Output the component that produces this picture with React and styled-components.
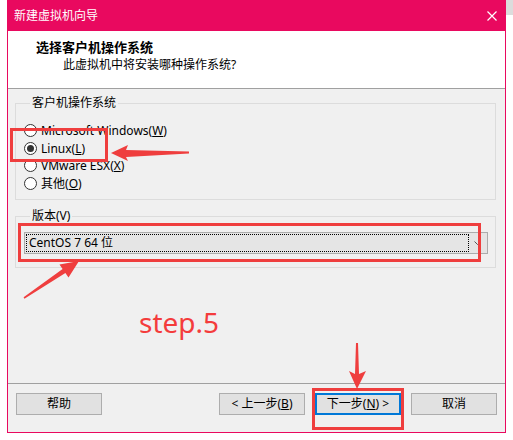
import styled, { createGlobalStyle } from 'styled-components';

const GlobalStyle = createGlobalStyle`
  body {
    margin: 0;
    background: #ffffff;
    font-family: "Noto Sans", "Noto Sans CJK SC", sans-serif;
    font-size: 12px;
    color: #000000;
  }
`;

const Page = styled.div`
  position: relative;
  width: 513px;
  height: 440px;
  padding-left: 7px;
  box-sizing: border-box;
  background: #ffffff linear-gradient(#dcdcdc, #dcdcdc) no-repeat right top / 7px 15px;
  overflow: hidden;
`;

const Window = styled.div`
  width: 499px;
  height: 433px;
  box-sizing: border-box;
  border: 1px solid #e9095f;
  border-top: 0;
  background: #f0f0f0;
  display: flex;
  flex-direction: column;
`;

const TitleBar = styled.div`
  height: 31px;
  flex-shrink: 0;
  background: #e9095f;
  color: #ffffff;
  display: flex;
  align-items: center;
  justify-content: space-between;
  padding: 0 9px 0 7px;
  margin: 0 -1px;
  line-height: 16px;
`;

const Header = styled.div`
  height: 58px;
  flex-shrink: 0;
  box-sizing: border-box;
  background: #ffffff;
  border-bottom: 1px solid #a0a0a0;
  padding: 8px 0 0 28px;
  line-height: 16px;
`;

const HeaderTitle = styled.div`
  font-size: 13px;
  font-weight: bold;
`;

const HeaderText = styled.div`
  margin: 2px 0 0 27px;
`;

const Body = styled.div`
  flex: 1;
  padding: 6px 9px 0 7px;
`;

const Group = styled.fieldset`
  margin: ${(p) => p.$top || 0}px 0 0;
  padding: ${(p) => p.$pad};
  border: 1px solid #dcdcdc;
  min-width: 0;
`;

const Legend = styled.legend`
  margin-left: 6px;
  padding: 0 2px;
  line-height: 16px;
  color: #000000;
`;

const RadioRow = styled.label`
  display: flex;
  align-items: center;
  height: 17.5px;
  gap: 4px;
`;

const RadioCircle = styled.span`
  width: 13px;
  height: 13px;
  box-sizing: border-box;
  border: 1px solid #333333;
  border-radius: 50%;
  background: #ffffff;
  display: flex;
  align-items: center;
  justify-content: center;
  flex-shrink: 0;

  &::after {
    content: '';
    width: 7px;
    height: 7px;
    border-radius: 50%;
    background: ${(p) => (p.$checked ? '#333333' : 'transparent')};
  }
`;

const Key = styled.span`
  text-decoration: underline;
`;

const Select = styled.div`
  height: 22px;
  box-sizing: border-box;
  border: 1px solid #acacac;
  background: #e5e5e5;
  display: flex;
  align-items: center;
  padding: 1px;
`;

const SelectValue = styled.div`
  flex: 1;
  height: 18px;
  box-sizing: border-box;
  border: 1px dotted #000000;
  padding-left: 2px;
  line-height: 16px;
`;

const Chevron = styled.div`
  width: 17px;
  display: flex;
  justify-content: center;
`;

const Footer = styled.div`
  height: 39px;
  flex-shrink: 0;
  border-top: 1px solid #a0a0a0;
  padding: 9px 8px 0;
  display: flex;
  gap: 10px;
`;

const Button = styled.div`
  width: 86px;
  height: 22px;
  box-sizing: border-box;
  border: ${(p) => (p.$default ? '2px solid #0078d7' : '1px solid #adadad')};
  background: #e1e1e1;
  display: flex;
  align-items: center;
  justify-content: center;
  line-height: 16px;
  margin-left: ${(p) => (p.$push ? 'auto' : '0')};
`;

const Marks = styled.svg`
  position: absolute;
  left: 0;
  top: 0;
  pointer-events: none;
`;

const StepText = styled.div`
  position: absolute;
  left: 139px;
  top: 305px;
  font-size: 28px;
  line-height: 34px;
  color: #f43c3c;
`;

const radios = [
  { label: 'Microsoft Windows', key: 'W' },
  { label: 'Linux', key: 'L', checked: true },
  { label: 'VMware ESX', key: 'X' },
  { label: '其他', key: 'O' },
];

const App = () => {
  return (
    <Page>
      <GlobalStyle />
      <Window>
        <TitleBar>
          <span>新建虚拟机向导</span>
          <svg width="10" height="10" viewBox="0 0 10 10">
            <path d="M0.5 0.5 L9.5 9.5 M9.5 0.5 L0.5 9.5" stroke="#ffffff" strokeWidth="1.2" />
          </svg>
        </TitleBar>
        <Header>
          <HeaderTitle>选择客户机操作系统</HeaderTitle>
          <HeaderText>此虚拟机中将安装哪种操作系统?</HeaderText>
        </Header>
        <Body>
          <Group $pad="11px 0 7px 8px">
            <Legend>客户机操作系统</Legend>
            {radios.map((r) => (
              <RadioRow key={r.key}>
                <RadioCircle $checked={r.checked} />
                <span>
                  {r.label}(<Key>{r.key}</Key>)
                </span>
              </RadioRow>
            ))}
          </Group>
          <Group $top={8} $pad="8px 7px 13px 8px">
            <Legend>版本(V)</Legend>
            <Select>
              <SelectValue>CentOS 7 64 位</SelectValue>
              <Chevron>
                <svg width="7" height="4" viewBox="0 0 7 4">
                  <path d="M0.5 0.5 L3.5 3.5 L6.5 0.5" stroke="#555555" fill="none" />
                </svg>
              </Chevron>
            </Select>
          </Group>
        </Body>
        <Footer>
          <Button>帮助</Button>
          <Button $push>
            &lt; 上一步(<Key>B</Key>)
          </Button>
          <Button $default>
            下一步(<Key>N</Key>) &gt;
          </Button>
          <Button>取消</Button>
        </Footer>
      </Window>

      <Marks width="513" height="440" viewBox="0 0 513 440">
        <g fill="none" stroke="#ef3e3e" strokeWidth="3">
          <rect x="11.5" y="129.5" width="95" height="31" />
          <rect x="19.5" y="224.5" width="460" height="36" />
          <rect x="313.5" y="389.5" width="89" height="39" />
        </g>
        <g fill="#ef3e3e">
          <polygon points="111,153 128,145 126,150 189,151.5 189,153.5 126,157 128,161" />
          <polygon points="79,261 68.5,277.6 65.4,273.1 24.4,298.7 23.6,297.3 62.6,268.9 59.5,264.4" />
          <polygon points="357,389 349,371 355,374 356,343 358,343 359,374 366,371" />
        </g>
      </Marks>
      <StepText>step.5</StepText>
    </Page>
  );
};

export default App;
